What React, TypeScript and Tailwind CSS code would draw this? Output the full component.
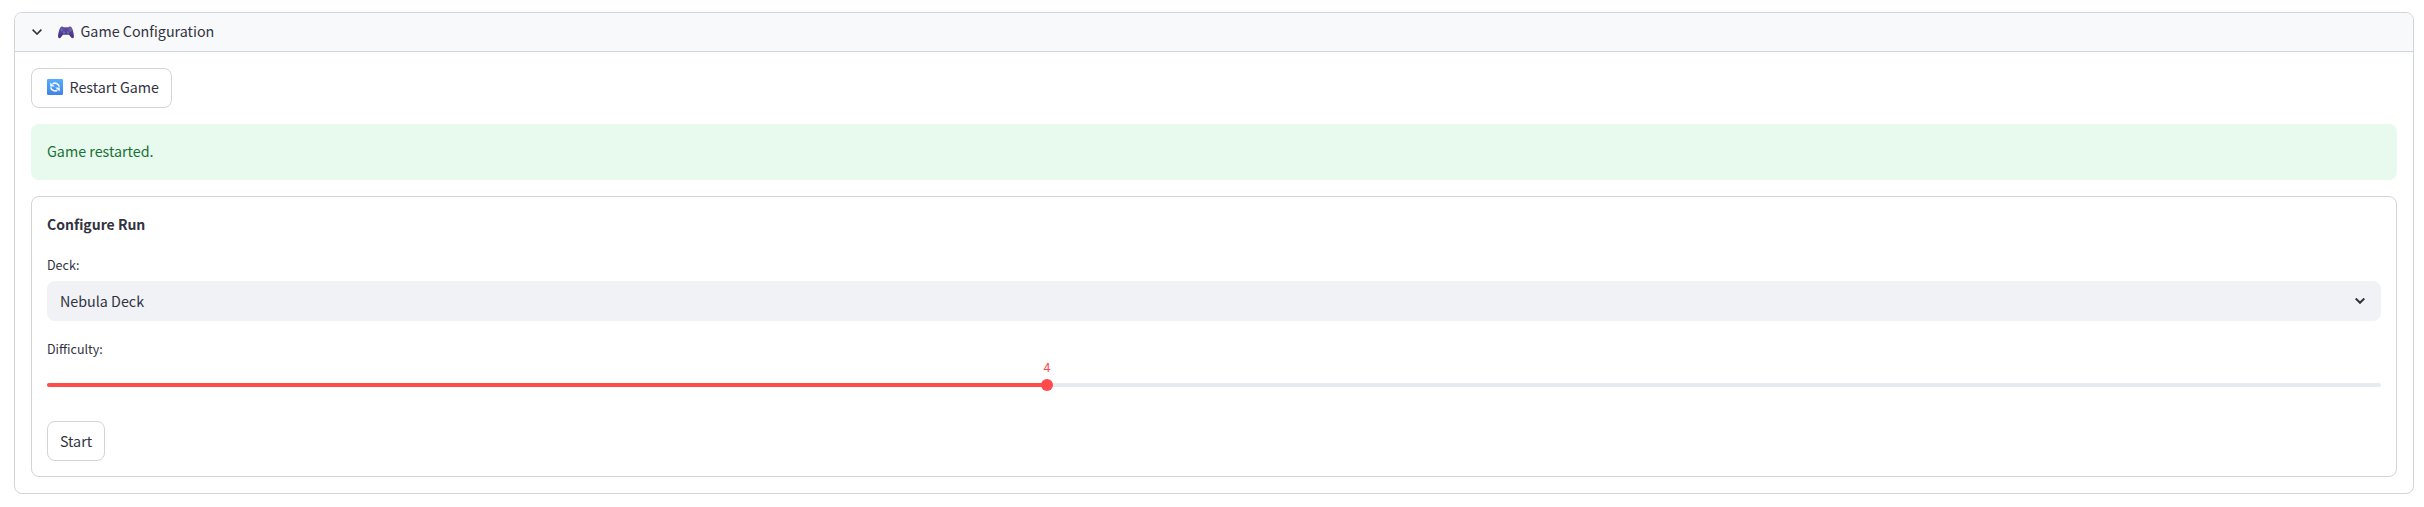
function Gamepad() {
  return (
    <svg viewBox="0 0 16 13" className="mt-px h-[13px] w-4 shrink-0">
      <defs>
        <linearGradient id="pad" x1="0" y1="0" x2="0" y2="1">
          <stop offset="0" stopColor="#6550a4" />
          <stop offset="1" stopColor="#4a2c7c" />
        </linearGradient>
      </defs>
      <path
        d="M3.200.8C4.400.2 5 .6 5.600 1.200h4.800C11 .6 11.600.2 12.800.8 14.600 1.700 16 8 15.900 10.600c-.1 1.900-1.700 2.100-2.700.9L11 8.700H5l-2.200 2.800c-1 1.200-2.600 1-2.700-.9C0 8 1.400 1.700 3.200.8Z"
        fill="url(#pad)"
      />
      <path d="M3.900 2.500v2.800M2.500 3.900h2.800" stroke="#4f78c8" strokeWidth="1" />
      <circle cx="6" cy="6.500" r="1.200" fill="#5470b8" />
      <circle cx="10" cy="6.500" r="1.200" fill="#5470b8" />
      <circle cx="12.200" cy="2.700" r=".7" fill="#4f8fe0" />
      <circle cx="13.400" cy="3.900" r=".8" fill="#e0405c" />
      <circle cx="12.200" cy="5.100" r=".7" fill="#3fae8a" />
      <circle cx="11" cy="3.900" r=".6" fill="#5b7bd0" />
    </svg>
  );
}

function Refresh() {
  return (
    <svg viewBox="0 0 16 16" className="mb-0.5 size-4 shrink-0">
      <defs>
        <linearGradient id="tile" x1="0" y1="0" x2="0" y2="1">
          <stop offset="0" stopColor="#58aefb" />
          <stop offset="1" stopColor="#3f83e6" />
        </linearGradient>
      </defs>
      <rect width="16" height="16" rx="1.300" fill="url(#tile)" />
      <path d="M5.600 4.700C8 3.400 11.600 4.300 12.200 7.700" fill="none" stroke="#f1f7ff" strokeWidth="1.700" />
      <path d="M10.400 11.300C8 12.600 4.400 11.700 3.800 8.300" fill="none" stroke="#f1f7ff" strokeWidth="1.700" />
      <path d="M3.200 3.400v4.200h4.600ZM12.800 12.600V8.400H8.200Z" fill="#f1f7ff" />
    </svg>
  );
}

export default function App() {
  return (
    <main className="h-[507px] w-[2424px] bg-white pt-3 pl-[14px] font-['Noto_Sans_CJK_SC','Noto_Sans',sans-serif] text-[14.3px] leading-6 text-[#31333f]">
      <section className="h-[482px] w-[2400px] overflow-hidden rounded-lg border border-[#d3d4d7]">
        <header className="flex h-[39px] items-center border-b border-[#d3d4d7] bg-[#f8f9fb] pl-[17px]">
          <svg viewBox="0 0 10 6" className="mr-4 mb-px h-[6px] w-[10px]" fill="none" stroke="currentColor" strokeWidth="1.600">
            <path d="m.6.6 4.400 4.400L9.400.6" />
          </svg>
          <Gamepad />
          <span className="ml-[6.500px] pb-0.5">Game Configuration</span>
        </header>
        <div className="flex flex-col items-start gap-4 p-4">
          <button className="flex h-10 w-[141px] items-center rounded-lg border border-[#d3d4d7] pl-[15px]">
            <Refresh />
            <span className="ml-[6.500px] pb-0.5">Restart Game</span>
          </button>
          <div className="flex h-14 w-full items-center rounded-lg bg-[#e8f9ee] px-4 pb-0.5 text-[#177233]">Game restarted.</div>
          <form className="h-[281px] w-full rounded-lg border border-[#d3d4d7] px-[15px] pt-[15px]">
            <h2 className="h-[43px] text-[14px] font-semibold">Configure Run</h2>
            <div className="h-[26px] text-[12.5px] leading-5">Deck:</div>
            <div className="flex h-10 items-center justify-between rounded-lg bg-[#f0f2f6] pr-4 pl-[13px]">
              <span>Nebula Deck</span>
              <svg viewBox="0 0 10 6" className="h-[6px] w-[10px]" fill="none" stroke="currentColor" strokeWidth="2">
                <path d="m.7.500 4.300 4.300L9.300.500" />
              </svg>
            </div>
            <div className="mt-[18px] h-6 text-[12.5px] leading-5">Difficulty:</div>
            <div className="relative mt-5 h-1 rounded-full bg-[#e6eaf1]">
              <div className="h-full w-[1000px] rounded-l-full bg-[#ff4b4b]" />
              <div className="absolute -top-1 left-[994px] size-3 rounded-full bg-[#ff4b4b]" />
              <span className="absolute -top-[26px] left-[990px] w-5 text-center text-[12.5px] leading-5 text-[#ff4b4b]">4</span>
            </div>
            <button type="button" className="mt-[34px] flex h-10 w-[58px] items-center justify-center rounded-lg border border-[#d3d4d7] pb-px">
              Start
            </button>
          </form>
        </div>
      </section>
    </main>
  );
}
